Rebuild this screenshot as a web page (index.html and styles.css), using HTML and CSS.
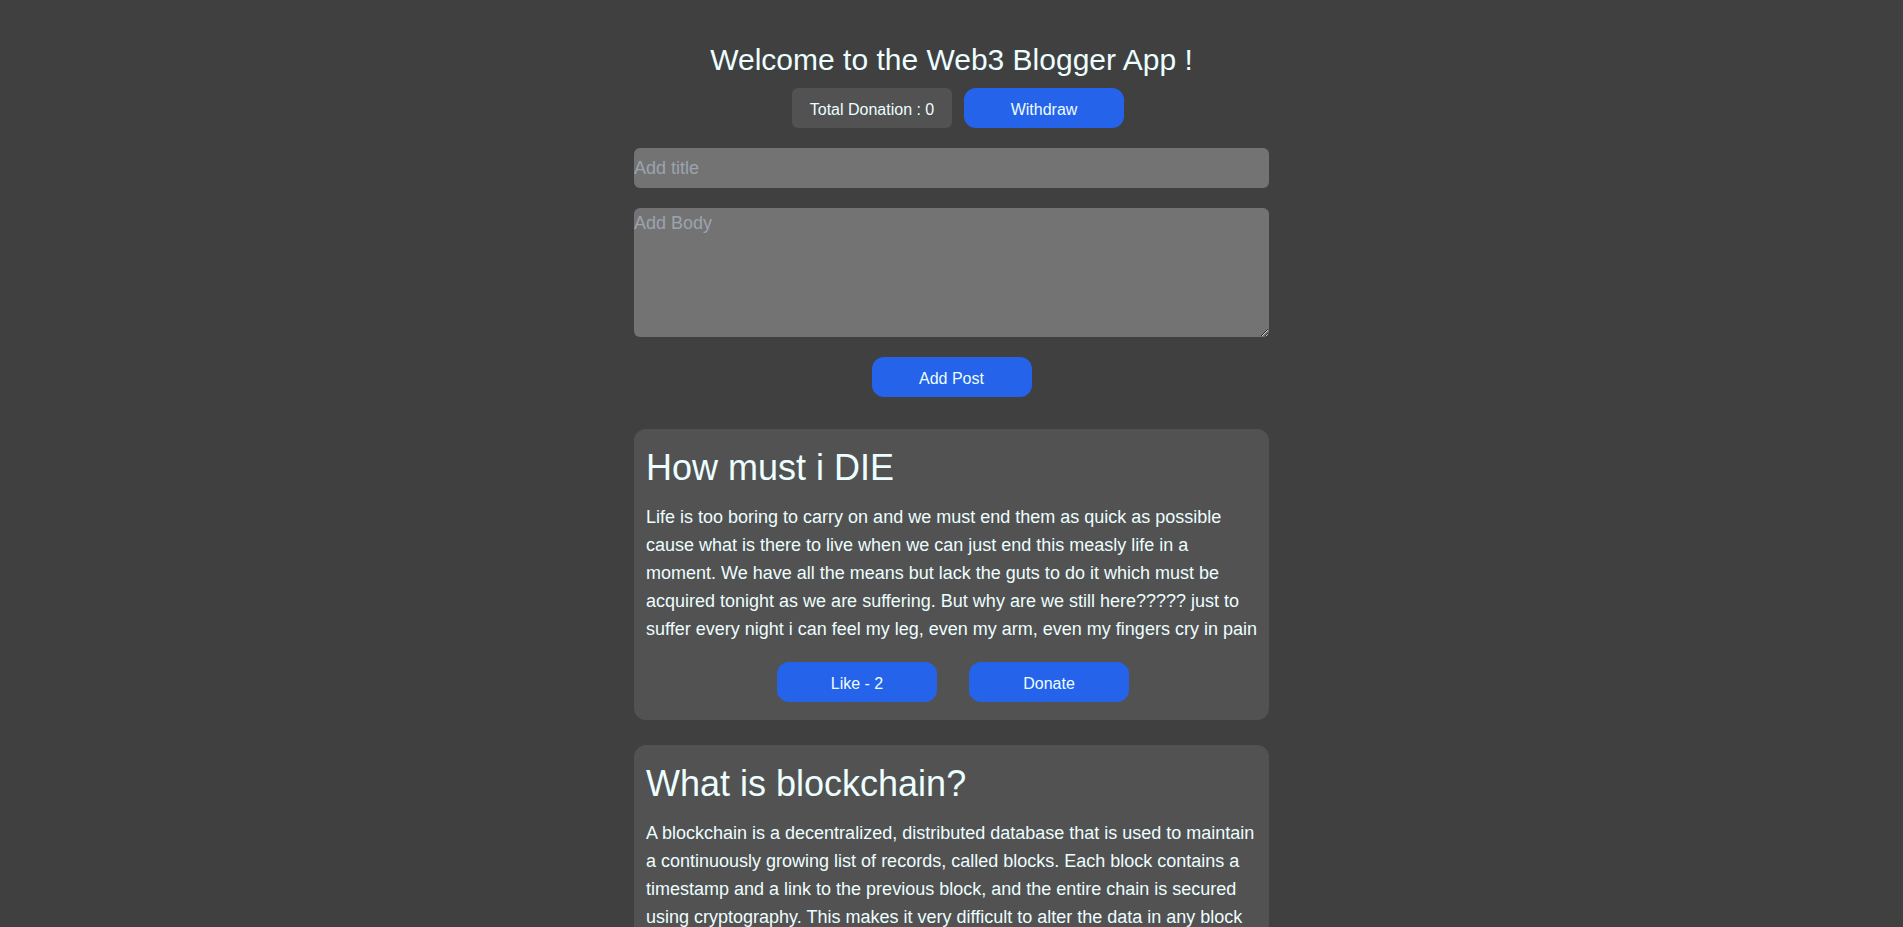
FILE: index.html
```html
<!DOCTYPE html>
<html lang="en">
<head>
<meta charset="utf-8">
<title>Web3 Blogger App</title>
<link rel="stylesheet" href="styles.css">
</head>
<body>
<main class="app">
  <h1 class="app-title">Welcome to the Web3 Blogger App !</h1>
  <div class="wallet-row">
    <div class="donation-total">Total Donation : 0</div>
    <button type="button" class="btn">Withdraw</button>
  </div>
  <form class="composer">
    <input class="field field-title" type="text" placeholder="Add title">
    <textarea class="field field-body" placeholder="Add Body"></textarea>
    <button type="button" class="btn btn-add">Add Post</button>
  </form>
  <section class="posts">
    <article class="post">
      <h2 class="post-title">How must i DIE</h2>
      <p class="post-body">Life is too boring to carry on and we must end them as quick as possible cause what is there to live when we can just end this measly life in a moment. We have all the means but lack the guts to do it which must be acquired tonight as we are suffering. But why are we still here????? just to suffer every night i can feel my leg, even my arm, even my fingers cry in pain</p>
      <div class="post-actions">
        <button type="button" class="btn">Like - 2</button>
        <button type="button" class="btn">Donate</button>
      </div>
    </article>
    <article class="post">
      <h2 class="post-title">What is blockchain?</h2>
      <p class="post-body">A blockchain is a decentralized, distributed database that is used to maintain a continuously growing list of records, called blocks. Each block contains a timestamp and a link to the previous block, and the entire chain is secured using cryptography. This makes it very difficult to alter the data in any block without also altering all of the blocks that come after it, which would require the consensus of the majority of the network.</p>
      <div class="post-actions">
        <button type="button" class="btn">Like - 1</button>
        <button type="button" class="btn">Donate</button>
      </div>
    </article>
  </section>
</main>
</body>
</html>
```
FILE: styles.css
```css
html, body {
  margin: 0;
  padding: 0;
  background: #404040;
}

body {
  font-family: "Liberation Sans", Arial, sans-serif;
  color: #ecfeff;
}

.app {
  width: 635px;
  margin: 0 auto;
  padding: 42px 0 40px;
  display: flex;
  flex-direction: column;
}

.app-title {
  margin: 0;
  font-size: 30px;
  line-height: 36px;
  font-weight: 400;
  text-align: center;
}

.wallet-row {
  display: flex;
  justify-content: center;
  gap: 12px;
  padding-left: 13px;
  margin-top: 10px;
}

.donation-total,
.btn {
  width: 160px;
  height: 40px;
  display: flex;
  align-items: center;
  justify-content: center;
  padding: 3px 0 0;
  font-family: "Liberation Sans", Arial, sans-serif;
  font-size: 16px;
  color: #ecfeff;
  box-sizing: border-box;
}

.donation-total {
  background: #525252;
  border-radius: 6px;
}

.btn {
  background: #2563eb;
  border: none;
  border-radius: 12px;
  cursor: pointer;
}

.composer {
  display: flex;
  flex-direction: column;
  align-items: center;
  margin: 20px 0 0;
}

.field {
  width: 100%;
  box-sizing: border-box;
  background: #737373;
  border: none;
  border-radius: 6px;
  padding: 0;
  margin: 0;
  font-family: "Liberation Sans", Arial, sans-serif;
  font-size: 18px;
  line-height: 28px;
  color: #ecfeff;
  outline: none;
}

.field::placeholder {
  color: #9ca3af;
}

.field-title {
  height: 40px;
  padding-top: 1px;
}

.field-body {
  height: 129px;
  margin-top: 20px;
  padding-top: 1px;
  display: block;
}

.btn-add {
  margin-top: 20px;
}

.posts {
  display: flex;
  flex-direction: column;
  gap: 25px;
  margin-top: 32px;
}

.post {
  background: #525252;
  border-radius: 12px;
  padding: 19px 9px 18px 12px;
}

.post-title {
  margin: 0;
  font-size: 36px;
  line-height: 40px;
  font-weight: 400;
}

.post-body {
  margin: 15px 0 0;
  font-size: 18px;
  line-height: 28px;
}

.post-actions {
  display: flex;
  justify-content: center;
  gap: 32px;
  margin-top: 19px;
}
```
